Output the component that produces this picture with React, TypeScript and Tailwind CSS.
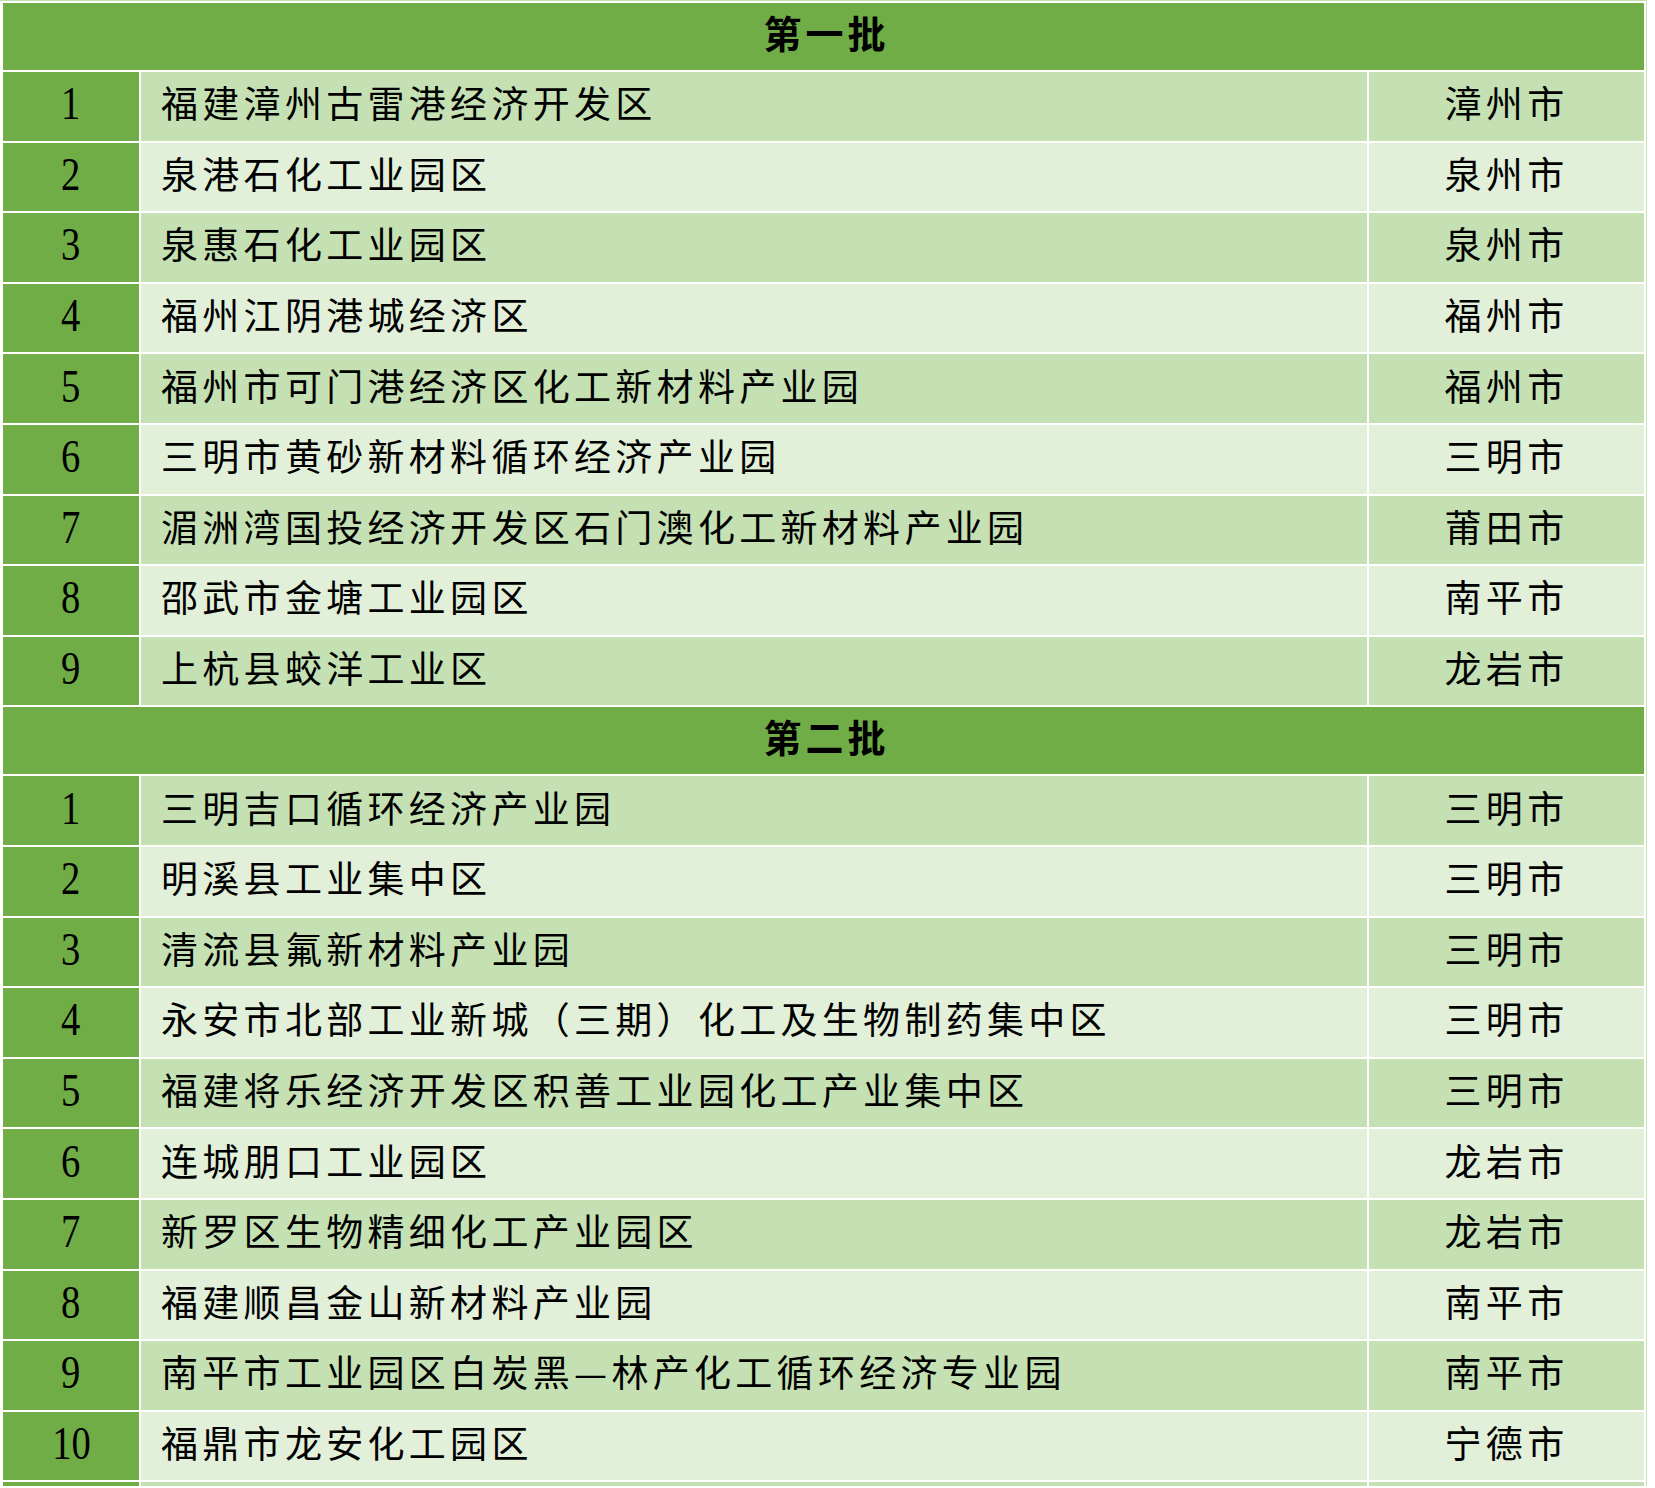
import React from "react";

type Row = { n: number; name: string; city: string };

const batch1: Row[] = [
  { n: 1, name: "福建漳州古雷港经济开发区", city: "漳州市" },
  { n: 2, name: "泉港石化工业园区", city: "泉州市" },
  { n: 3, name: "泉惠石化工业园区", city: "泉州市" },
  { n: 4, name: "福州江阴港城经济区", city: "福州市" },
  { n: 5, name: "福州市可门港经济区化工新材料产业园", city: "福州市" },
  { n: 6, name: "三明市黄砂新材料循环经济产业园", city: "三明市" },
  { n: 7, name: "湄洲湾国投经济开发区石门澳化工新材料产业园", city: "莆田市" },
  { n: 8, name: "邵武市金塘工业园区", city: "南平市" },
  { n: 9, name: "上杭县蛟洋工业区", city: "龙岩市" },
];

const batch2: Row[] = [
  { n: 1, name: "三明吉口循环经济产业园", city: "三明市" },
  { n: 2, name: "明溪县工业集中区", city: "三明市" },
  { n: 3, name: "清流县氟新材料产业园", city: "三明市" },
  { n: 4, name: "永安市北部工业新城（三期）化工及生物制药集中区", city: "三明市" },
  { n: 5, name: "福建将乐经济开发区积善工业园化工产业集中区", city: "三明市" },
  { n: 6, name: "连城朋口工业园区", city: "龙岩市" },
  { n: 7, name: "新罗区生物精细化工产业园区", city: "龙岩市" },
  { n: 8, name: "福建顺昌金山新材料产业园", city: "南平市" },
  { n: 9, name: "南平市工业园区白炭黑—林产化工循环经济专业园", city: "南平市" },
  { n: 10, name: "福鼎市龙安化工园区", city: "宁德市" },
];

const cjk = "font-['Noto_Sans_CJK_SC','Noto_Sans',sans-serif]";

function Header({ title }: { title: string }) {
  return (
    <div className="flex h-[67px] w-[1641px] items-center justify-center bg-[#70ad47] pb-[10px] pl-[6px]">
      <span className={`${cjk} text-[38px] font-bold leading-none tracking-[4px] text-black`}>
        {title}
      </span>
    </div>
  );
}

function DataRow({ row, dark }: { row: Row; dark: boolean }) {
  const bg = dark ? "bg-[#c5e0b3]" : "bg-[#e2efd9]";
  return (
    <div className="flex h-[68.6px] gap-[2px]">
      <div className="flex w-[136px] items-center justify-center bg-[#70ad47] pb-[5px]">
        <span className="inline-block scale-x-[0.82] font-['Liberation_Serif',serif] text-[47px] leading-none text-black">
          {row.n}
        </span>
      </div>
      <div className={`flex w-[1226px] items-center pl-[20px] pb-[7px] ${bg}`}>
        <span className={`${cjk} text-[37px] leading-none tracking-[4.3px] text-black`}>
          {row.name}
        </span>
      </div>
      <div className={`flex w-[275px] items-center justify-center pb-[7px] ${bg}`}>
        <span className={`${cjk} text-[37px] leading-none tracking-[4.3px] text-black`}>
          {row.city}
        </span>
      </div>
    </div>
  );
}

export default function App() {
  return (
    <div className="min-h-[1488px] w-[1655px] bg-white">
      <div className="flex w-[1647px] flex-col gap-[2px] border-t border-r border-[#c5e0b3] pl-[3px] pt-[2px]">
        <Header title="第一批" />
        {batch1.map((r, i) => (
          <DataRow key={`a${r.n}`} row={r} dark={i % 2 === 0} />
        ))}
        <Header title="第二批" />
        {batch2.map((r, i) => (
          <DataRow key={`b${r.n}`} row={r} dark={i % 2 === 0} />
        ))}
        <div className="flex h-[4px] gap-[2px]">
          <div className="w-[136px] bg-[#70ad47]" />
          <div className="w-[1226px] bg-[#c5e0b3]" />
          <div className="w-[275px] bg-[#c5e0b3]" />
        </div>
      </div>
    </div>
  );
}
